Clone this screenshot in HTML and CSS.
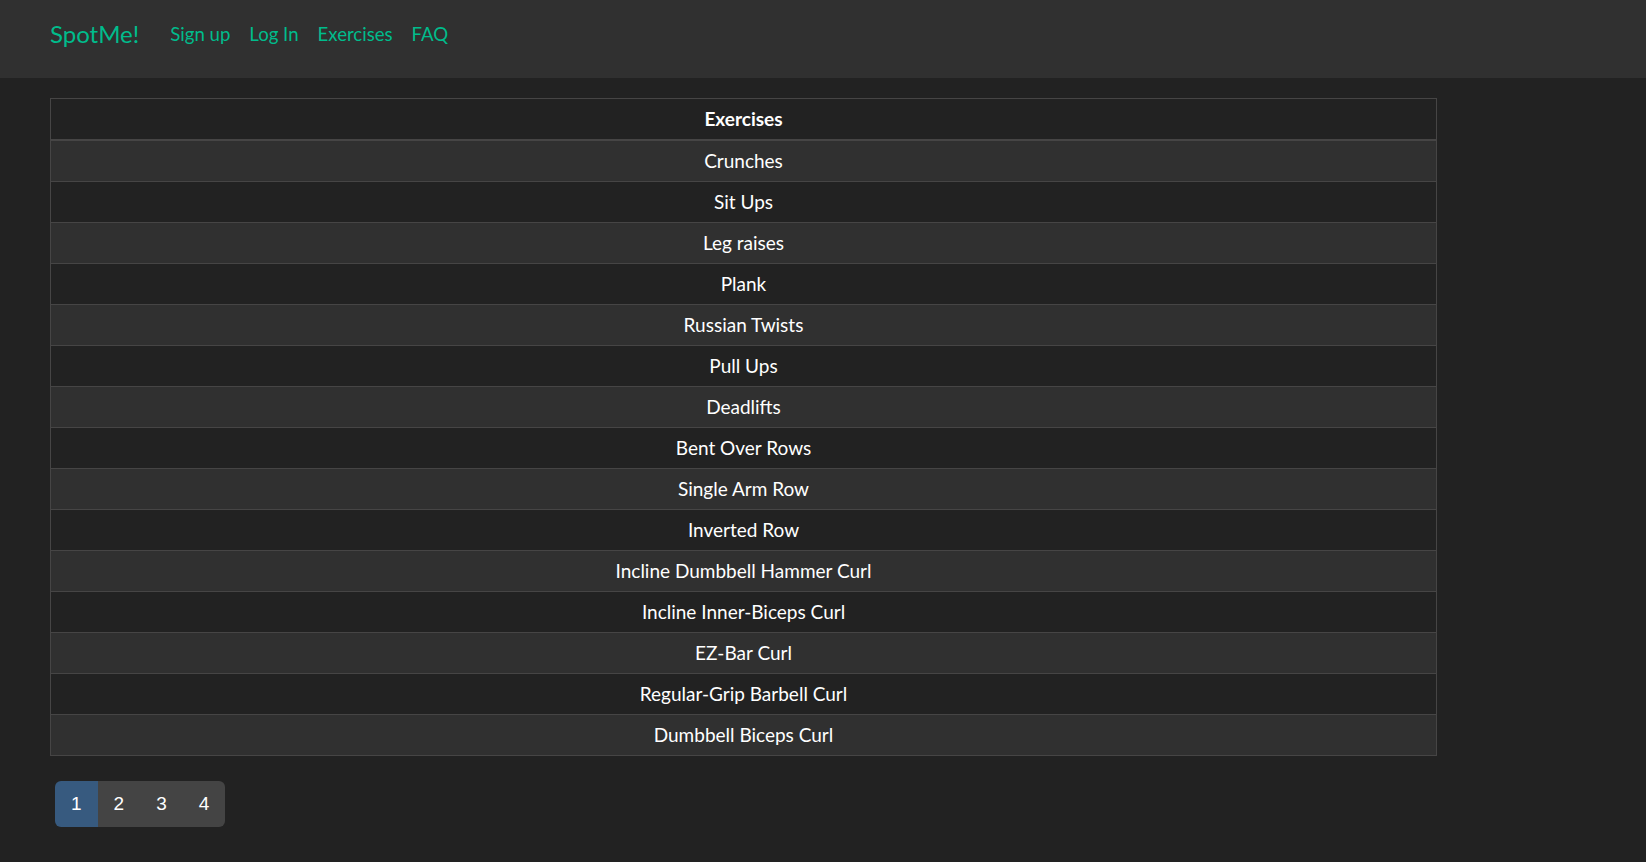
FILE: index.html
```html
<!DOCTYPE html>
<html lang="en">
<head>
<meta charset="utf-8">
<title>SpotMe!</title>
<link rel="stylesheet" href="styles.css">
</head>
<body>
<nav class="navbar">
  <a class="brand" href="#">SpotMe!</a>
  <ul class="nav-links">
    <li><a href="#">Sign up</a></li>
    <li><a href="#">Log In</a></li>
    <li><a href="#">Exercises</a></li>
    <li><a href="#">FAQ</a></li>
  </ul>
</nav>
<main class="content">
  <table class="exercise-table">
    <thead>
      <tr><th>Exercises</th></tr>
    </thead>
    <tbody>
      <tr><td>Crunches</td></tr>
      <tr><td>Sit Ups</td></tr>
      <tr><td>Leg raises</td></tr>
      <tr><td>Plank</td></tr>
      <tr><td>Russian Twists</td></tr>
      <tr><td>Pull Ups</td></tr>
      <tr><td>Deadlifts</td></tr>
      <tr><td>Bent Over Rows</td></tr>
      <tr><td>Single Arm Row</td></tr>
      <tr><td>Inverted Row</td></tr>
      <tr><td>Incline Dumbbell Hammer Curl</td></tr>
      <tr><td>Incline Inner-Biceps Curl</td></tr>
      <tr><td>EZ-Bar Curl</td></tr>
      <tr><td>Regular-Grip Barbell Curl</td></tr>
      <tr><td>Dumbbell Biceps Curl</td></tr>
    </tbody>
  </table>
  <ul class="pagination">
    <li class="page active"><a href="#">1</a></li>
    <li class="page"><a href="#">2</a></li>
    <li class="page"><a href="#">3</a></li>
    <li class="page"><a href="#">4</a></li>
  </ul>
</main>
</body>
</html>
```
FILE: styles.css
```css
* { box-sizing: border-box; }
html, body {
  margin: 0;
  padding: 0;
  background: #222222;
  color: #ffffff;
  font-family: Lato, "Open Sans", sans-serif;
}
a { text-decoration: none; }
.navbar {
  height: 78px;
  background: #303030;
  display: flex;
  align-items: flex-start;
  padding: 17px 0 0 50px;
}
.brand {
  color: #00bc8c;
  font-size: 24px;
  line-height: 34px;
  margin-right: 31px;
}
.nav-links {
  list-style: none;
  margin: 0;
  padding: 0;
  display: flex;
  gap: 19px;
}
.nav-links a {
  color: #00bc8c;
  font-size: 18.6px;
  line-height: 34px;
}
.content {
  padding: 20px 50px 0 50px;
}
.exercise-table {
  width: 1387px;
  border-collapse: collapse;
  border: 1px solid #464545;
  font-size: 19px;
}
.exercise-table th,
.exercise-table td {
  text-align: center;
  padding: 8px;
  line-height: 24px;
  border: 1px solid #464545;
  border-left: 0;
  border-right: 0;
}
.exercise-table th {
  font-weight: 700;
  border-bottom: 2px solid #464545;
}
.exercise-table tbody tr:nth-child(odd) {
  background: #303030;
}
.pagination {
  list-style: none;
  display: flex;
  margin: 25px 0 0 5px;
  padding: 0;
  font-family: "Liberation Sans", Arial, sans-serif;
}
.page a {
  display: block;
  padding: 10px 16px;
  font-size: 19px;
  line-height: 26px;
  color: #ffffff;
  background: #444444;
}
.page.active a { background: #375a7f; }
.page:first-child a { border-radius: 6px 0 0 6px; }
.page:last-child a { border-radius: 0 6px 6px 0; }
```
